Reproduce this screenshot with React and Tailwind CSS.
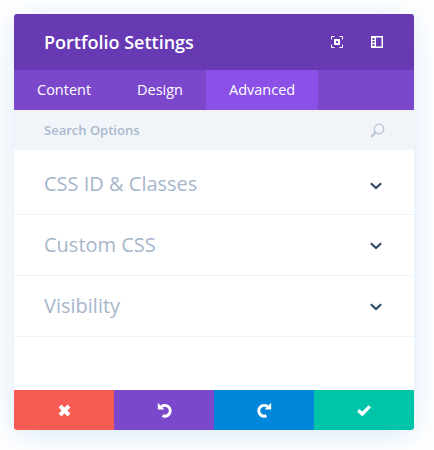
import React from "react";

const Chevron = ({ className }) => (
  <svg className={className} width="12" height="8" viewBox="0 0 12 8" fill="none" stroke="#2f4a66" strokeWidth="2.200" strokeLinejoin="miter">
    <path d="M.8 1.200L6 6l5.200-4.800" />
  </svg>
);

const Row = ({ label, className, chevronClass }) => (
  <div className={`flex items-center justify-between pl-[30px] pr-[32px] border-b border-[#eff3f8] ${className}`}>
    <span className="text-[20px] text-[#a6b6cb]">{label}</span>
    <Chevron className={chevronClass} />
  </div>
);

export default function App() {
  return (
    <div className="w-[434px] h-[450px] p-[14px] bg-white [font-family:'Open_Sans',sans-serif]">
      <div className="w-[400px] h-[416px] flex flex-col rounded-[3px] overflow-hidden bg-white shadow-[0_5px_30px_rgba(43,135,218,0.18)]">
        <div className="h-14 flex items-center justify-between bg-[#6739b3] pl-[30px] pr-[31px]">
          <span className="text-[18px] font-semibold text-white">Portfolio Settings</span>
          <div className="flex items-center gap-[28px]">
            <svg width="12" height="12" viewBox="0 0 12 12" fill="none" stroke="white">
              <path d="M.5 3.500v-3h3M8.500.5h3v3M11.500 8.500v3h-3M3.500 11.500h-3v-3" />
              <path d="M3 3h6v6H3z M5 5v2h2V5z" fill="white" fillRule="evenodd" stroke="none" />
            </svg>
            <svg width="12" height="12" viewBox="0 0 12 12">
              <path fill="white" fillRule="evenodd" d="M0 0h12v12H0z M5 1.500v9h5.500v-9z M1.500 2v2H3.500V2z M1.500 5v2H3.500V5z M1.500 8v2H3.500V8z" />
            </svg>
          </div>
        </div>
        <div className="h-10 flex bg-[#7b48cc] text-[14.5px] font-medium text-white">
          <div className="w-[100px] pl-[23px] flex items-center">Content</div>
          <div className="w-[92px] pl-[23px] flex items-center">Design</div>
          <div className="w-[112px] pl-[23px] flex items-center bg-[#8a50e8]">Advanced</div>
        </div>
        <div className="h-10 flex items-center justify-between bg-[#f1f5f9] pl-[30px] pr-[29px]">
          <span className="pt-[1px] text-[13px] font-semibold text-[#a9b9cd]">Search Options</span>
          <svg width="15" height="15" viewBox="0 0 15 15" fill="none" stroke="#b4c2d4" strokeWidth="1.200">
            <circle cx="9" cy="6" r="4.800" />
            <path d="M5.500 9.500L1 14" strokeWidth="1.800" />
          </svg>
        </div>
        <div className="flex-1 flex flex-col">
          <Row label="CSS ID & Classes" className="h-[65px] pt-1" chevronClass="mt-[3px]" />
          <Row label="Custom CSS" className="h-[61px]" chevronClass="mt-[2px]" />
          <Row label="Visibility" className="h-[61px]" chevronClass="mt-[2px]" />
        </div>
        <div className="h-10 grid grid-cols-4 text-white">
          <div className="flex items-center justify-center bg-[#f85a54]">
            <svg width="13" height="13" viewBox="0 0 13 13" fill="none" stroke="white" strokeWidth="4">
              <path d="M2 2l9 9M11 2l-9 9" />
            </svg>
          </div>
          <div className="flex items-center justify-center bg-[#7b48cc]">
            <svg className="ml-[2px]" width="16" height="16" viewBox="0 0 16 16" fill="none" stroke="white">
              <path d="M4.500 4.500A5.400 5.400 0 1 1 5.500 13.700" strokeWidth="3" />
              <path d="M.8 .8v6.700h6.700z" fill="white" stroke="none" />
            </svg>
          </div>
          <div className="flex items-center justify-center bg-[#0087dc]">
            <svg width="16" height="16" viewBox="0 0 16 16" fill="none" stroke="white">
              <path d="M11.500 4.500A5.400 5.400 0 1 0 10.500 13.700" strokeWidth="3" />
              <path d="M15.200 .8v6.700h-6.700z" fill="white" stroke="none" />
            </svg>
          </div>
          <div className="flex items-center justify-center bg-[#00c4a8]">
            <svg width="14" height="11" viewBox="0 0 14 11" fill="none" stroke="white" strokeWidth="3.400">
              <path d="M1.200 5.200l4 3.800 7.600-7.600" />
            </svg>
          </div>
        </div>
      </div>
    </div>
  );
}
